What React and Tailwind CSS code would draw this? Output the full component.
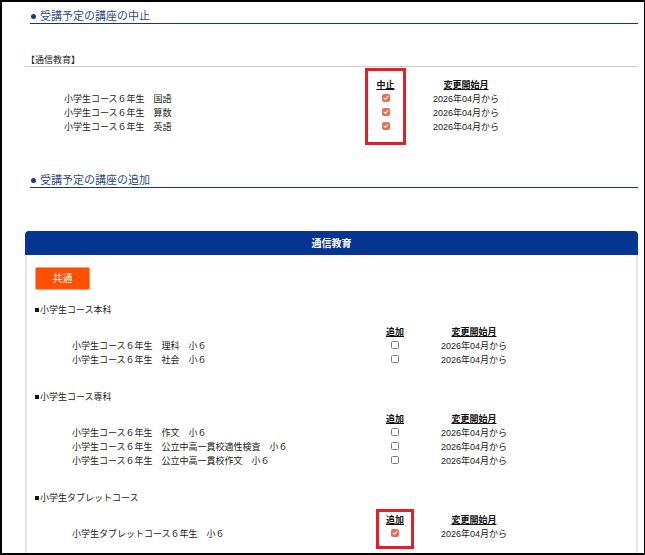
import React from "react";

const FONT = { fontFamily: '"Liberation Sans", "Noto Sans CJK JP", sans-serif' };

const cancelRows = [
  { label: "小学生コース６年生　国語", checked: true },
  { label: "小学生コース６年生　算数", checked: true },
  { label: "小学生コース６年生　英語", checked: true },
];

const sections = [
  {
    title: "小学生コース本科",
    rows: [
      { label: "小学生コース６年生　理科　小６", checked: false },
      { label: "小学生コース６年生　社会　小６", checked: false },
    ],
  },
  {
    title: "小学生コース専科",
    rows: [
      { label: "小学生コース６年生　作文　小６", checked: false },
      { label: "小学生コース６年生　公立中高一貫校適性検査　小６", checked: false },
      { label: "小学生コース６年生　公立中高一貫校作文　小６", checked: false },
    ],
  },
  {
    title: "小学生タブレットコース",
    rows: [{ label: "小学生タブレットコース６年生　小６", checked: true }],
    box: true,
  },
];

function Checkbox({ checked }) {
  if (checked) {
    return (
      <span className="inline-flex h-[8px] w-[8px] items-center justify-center rounded-[2px] bg-[#ee6a53]">
        <svg width="6" height="6" viewBox="0 0 10 10">
          <path d="M1.8 5.2 L4.1 7.4 L8.3 2.4" fill="none" stroke="#fff" strokeWidth="1.8" strokeLinecap="round" strokeLinejoin="round" />
        </svg>
      </span>
    );
  }
  return <span className="inline-block h-[8px] w-[8px] rounded-[1.5px] border border-[#7d7d7d] bg-white" />;
}

function Heading({ children, className = "" }) {
  return (
    <div className={`ml-[5px] border-b-[1.5px] border-[#17357f] ${className}`}>
      <div
        className="flex h-[14px] items-center text-[11px] leading-[14px] text-[#2e4a8a]"
        style={{ fontFamily: '"Liberation Serif", "Noto Sans CJK JP", serif' }}
      >
        <span className="mr-[4px] ml-[1px] inline-block h-[5px] w-[5px] rounded-full bg-[#1a3a8a]" />
        {children}
      </div>
    </div>
  );
}

function CourseTable({ indentCls, labelCls, checkCls, header, rows, boxCls }) {
  return (
    <div className={`flex ${indentCls}`}>
      <div className={`shrink-0 ${labelCls}`}>
        <div className="h-[14px]" />
        {rows.map((row) => (
          <div key={row.label} className="h-[14px] whitespace-nowrap leading-[14px] text-[#222]">
            {row.label}
          </div>
        ))}
      </div>
      <div className={`relative flex shrink-0 flex-col items-center ${checkCls}`}>
        {boxCls ? <div className={`absolute inset-x-0 border-[3px] border-[#e61e28] ${boxCls}`} /> : null}
        <div className="h-[14px] font-bold leading-[14px] text-[#111] underline">{header}</div>
        {rows.map((row) => (
          <div key={row.label} className="flex h-[14px] items-center justify-center pb-[2px]">
            <Checkbox checked={row.checked} />
          </div>
        ))}
      </div>
      <div className="ml-[20px] w-[80px] shrink-0 text-center text-[#222]">
        <div className="h-[14px] font-bold leading-[14px] text-[#111] underline">変更開始月</div>
        {rows.map((row) => (
          <div key={row.label} className="h-[14px] leading-[14px]">
            2026年04月から
          </div>
        ))}
      </div>
    </div>
  );
}

export default function App() {
  return (
    <div
      className="h-[555px] w-[645px] overflow-hidden border-t-2 border-b-2 border-l-2 border-r border-black bg-white text-[9px] text-[#333]"
      style={FONT}
    >
      <div className="pl-[23px] pr-[6px]">
        <div className="pt-[7px]">
          <Heading>受講予定の講座の中止</Heading>
        </div>

        <div className="mt-[30px] border-b border-[#cccccc] pl-[1px] text-[9px] leading-[12px] text-[#222]">
          【通信教育】
        </div>

        <div className="pt-[11px]">
          <CourseTable
            indentCls="pl-[39px]"
            labelCls="w-[301px]"
            checkCls="w-[41px]"
            header="中止"
            rows={cancelRows}
            boxCls="-top-[10px] -bottom-[11px]"
          />
        </div>

        <Heading className="mt-[39px]">受講予定の講座の追加</Heading>

        <div className="mt-[43px]">
          <div className="flex h-[24px] items-center justify-center rounded-t-[4px] bg-[#063592] text-[10px] font-bold text-white">
            通信教育
          </div>
          <div className="border-x-2 border-[#e6e6e6] pt-[12px] pl-[8px] pb-[40px]">
            <button className="flex h-[23px] w-[55px] items-center justify-center rounded-[2px] border border-[#ff9a7a] bg-[#ff4f00] text-[10px] text-white">
              共通
            </button>

            {sections.map((section, i) => (
              <div key={section.title} className={i === 0 ? "mt-[13px]" : "mt-[23px]"}>
                <div className="flex h-[14px] items-center leading-[14px] text-[#222]">
                  <span className="mr-[1px] inline-block h-[4px] w-[4px] bg-[#111]" />
                  {section.title}
                </div>
                <div className="mt-[8px]">
                  <CourseTable
                    indentCls="pl-[37px]"
                    labelCls="w-[304px]"
                    checkCls="w-[38px]"
                    header="追加"
                    rows={section.rows}
                    boxCls={section.box ? "-top-[4px] -bottom-[8px]" : null}
                  />
                </div>
              </div>
            ))}
          </div>
        </div>
      </div>
    </div>
  );
}
